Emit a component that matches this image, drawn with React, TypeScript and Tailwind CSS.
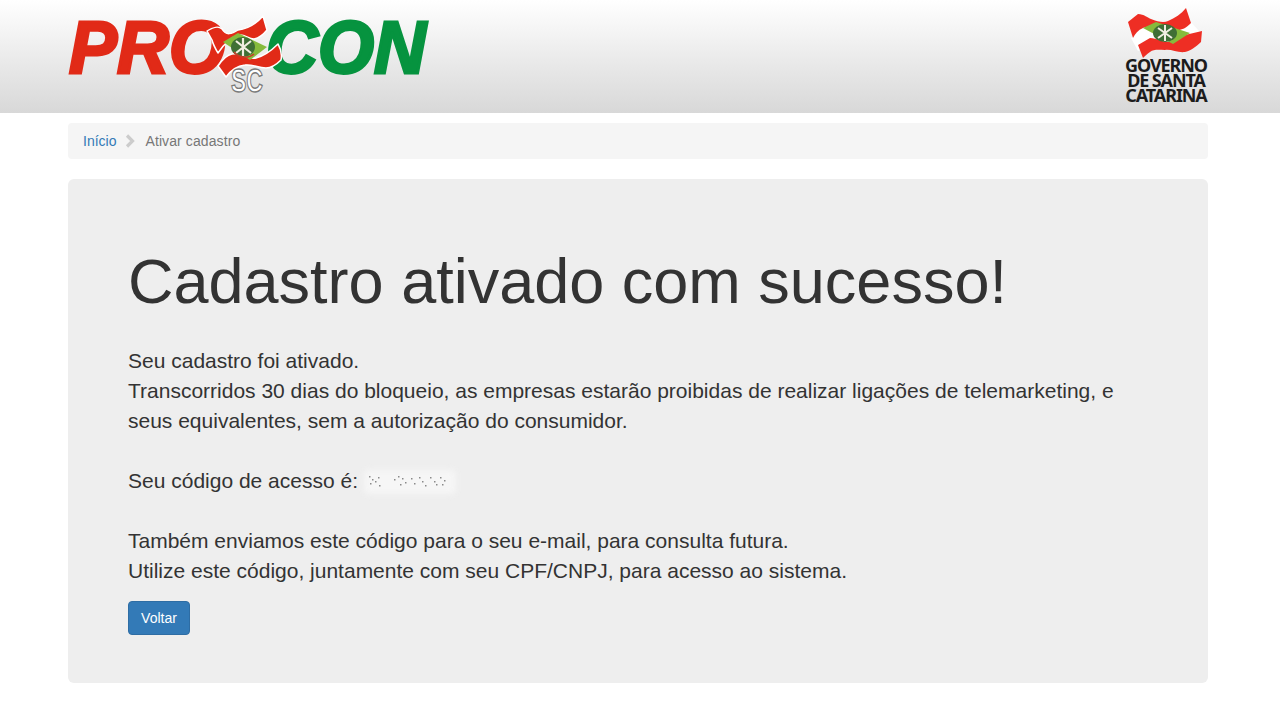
const font = { fontFamily: '"Liberation Sans", Arial, sans-serif' };

function ProconLogo() {
  return (
    <svg width="364" height="108" viewBox="0 0 364 108" className="block">
      {/* lettering */}
      <text x="3" y="71" fontSize="74" fontWeight="700" fontStyle="italic" fill="#e12a17" stroke="#e12a17" strokeWidth="3" textLength="156" lengthAdjust="spacingAndGlyphs" style={font}>PRO</text>
      <text x="200" y="71" fontSize="74" fontWeight="700" fontStyle="italic" fill="#06933f" stroke="#06933f" strokeWidth="3" textLength="160" lengthAdjust="spacingAndGlyphs" style={font}>CON</text>
      {/* flag */}
      <path d="M141 29 C147 25 153 24 156 27 C160 34 166 32 172 28 C180 27 190 22 197 14 L201 28 C197 33 193 36 188 37 C182 37 179 32 173 33 C166 35 158 42 152 51 C149 46 147 42 146 38 Z" fill="#e12a17" stroke="#fff" strokeWidth="1.5" strokeLinejoin="round" />
      <path d="M152 64 C156 58 160 53 166 52 C174 50 182 58 190 56 C198 54 206 48 212 42 C215 47 216 53 215 58 C210 63 206 66 200 66 C192 66 186 62 179 63 C170 64 165 68 160 75 Z" fill="#e12a17" stroke="#fff" strokeWidth="1.5" strokeLinejoin="round" />
      <path d="M157 40 L172 31 L201 45 L184 58 Z" fill="#86bb3c" />
      <ellipse cx="177" cy="45" rx="12" ry="10" fill="#3f6f35" />
      <path d="M170 39 L185 51 M185 39 L170 51 M177 36 L177 54" stroke="#f1eee2" strokeWidth="2.2" />
      <path d="M168 50 C173 56 182 57 188 52" fill="none" stroke="#c73c28" strokeWidth="1.6" />
      {/* SC badge */}
      <text x="165" y="90" fontSize="34" fontWeight="700" fill="#fff" stroke="#7a7a7a" strokeWidth="1.4" textLength="32" lengthAdjust="spacingAndGlyphs" style={font}>SC</text>
    </svg>
  );
}

function GovernoLogo() {
  return (
    <div className="flex flex-col w-[84px]">
      <svg width="84" height="50" viewBox="0 0 84 50" className="block">
        <path d="M7 30 L19 19 L54 21 L66 13 L76 24 L60 36 L40 33 L22 39 L14 43 Z" fill="#ffffff" />
        <path d="M4 14 L14 6 C20 6 24 10 27 11 C34 14 40 15 44 13 C51 10 57 6 62 0 L67 15 C62 20 58 22 54 22 C46 22 42 18 37 19 C30 20 24 18 19 20 C14 22 11 26 9 30 Z" fill="#ee2e24" />
        <path d="M14 37 L26 30 C33 30 38 34 44 34 C50 34 55 30 61 27 L78 23 L77 34 C72 39 66 43 61 44 C54 45 47 41 41 42 C35 42 30 41 26 44 C23 46 21 48 19 50 Z" fill="#ee2e24" />
        <path d="M19 20 L32 14 L66 25 L49 36 Z" fill="#86bb3c" />
        <ellipse cx="41" cy="25" rx="12" ry="9" fill="#3f6f35" />
        <path d="M34 20 L48 30 M48 20 L34 30 M41 17 L41 33" stroke="#f1eee2" strokeWidth="2" />
      </svg>
      <div className="text-[#1c1c1c] font-bold text-[18px] leading-[15px] tracking-[-1.1px] text-center whitespace-nowrap" style={{ fontFamily: '"Noto Sans", sans-serif' }}>
        GOVERNO<br />DE SANTA<br />CATARINA
      </div>
    </div>
  );
}

// blurred-out access code
function HiddenCode() {
  const specks = [
    [5, 6], [8, 9], [6, 13], [11, 11], [14, 7], [15, 15], [30, 9], [34, 6], [38, 8], [41, 12], [36, 14], [47, 8],
    [50, 13], [55, 7], [58, 11], [61, 15], [66, 7], [70, 11], [72, 14], [76, 7], [80, 10], [78, 14],
  ];
  return (
    <span className="inline-block relative align-middle w-[92px] h-[24px]">
      <span className="absolute inset-0 bg-[#f6f6f6] rounded blur-[3px]" />
      <svg width="92" height="24" viewBox="0 0 92 24" className="absolute inset-0">
        {specks.map(([x, y], i) => (
          <rect key={i} x={x} y={y} width="1.5" height="1.5" fill="#8a8a8a" />
        ))}
      </svg>
    </span>
  );
}

export default function App() {
  return (
    <div className="min-h-[708px] bg-white text-[#333]" style={font}>
      <header className="h-[113px] bg-gradient-to-b from-white to-[#d8d8d8] pl-[66px] pr-[72px] flex justify-between">
        <div className="pt-[2px]"><ProconLogo /></div>
        <div className="pt-[8px]"><GovernoLogo /></div>
      </header>

      <main className="w-[1140px] ml-[68px] pt-[10px]">
        <nav className="h-[36px] bg-[#f5f5f5] rounded flex items-center px-[15px] text-[14px] mb-[20px]">
          <a className="text-[#337ab7]">Início</a>
          <svg width="12" height="14" viewBox="0 0 12 14" className="ml-[8px] mr-[9px]">
            <path d="M3 1.5 L8.5 7 L3 12.5" fill="none" stroke="#ccc" strokeWidth="3.2" />
          </svg>
          <span className="text-[#777] tracking-[0.1px]">Ativar cadastro</span>
        </nav>

        <section className="h-[504px] bg-[#eee] rounded-md px-[60px] pt-[48px]">
          <h1 className="text-[63px] leading-[69px] text-[#333] mt-[20px] mb-[20px]">Cadastro ativado com sucesso!</h1>
          <p className="text-[21px] leading-[30px] font-light mt-[30px] mb-[15px] text-[#333]">
            Seu cadastro foi ativado.<br />
            Transcorridos 30 dias do bloqueio, as empresas estarão proibidas de realizar ligações de telemarketing, e seus equivalentes, sem a autorização do consumidor.<br />
            <br />
            Seu código de acesso é: <HiddenCode /><br />
            <br />
            Também enviamos este código para o seu e-mail, para consulta futura.<br />
            Utilize este código, juntamente com seu CPF/CNPJ, para acesso ao sistema.
          </p>
          <button className="w-[62px] h-[34px] rounded bg-[#337ab7] border border-[#2e6da4] text-white text-[14px]">Voltar</button>
        </section>
      </main>
    </div>
  );
}
